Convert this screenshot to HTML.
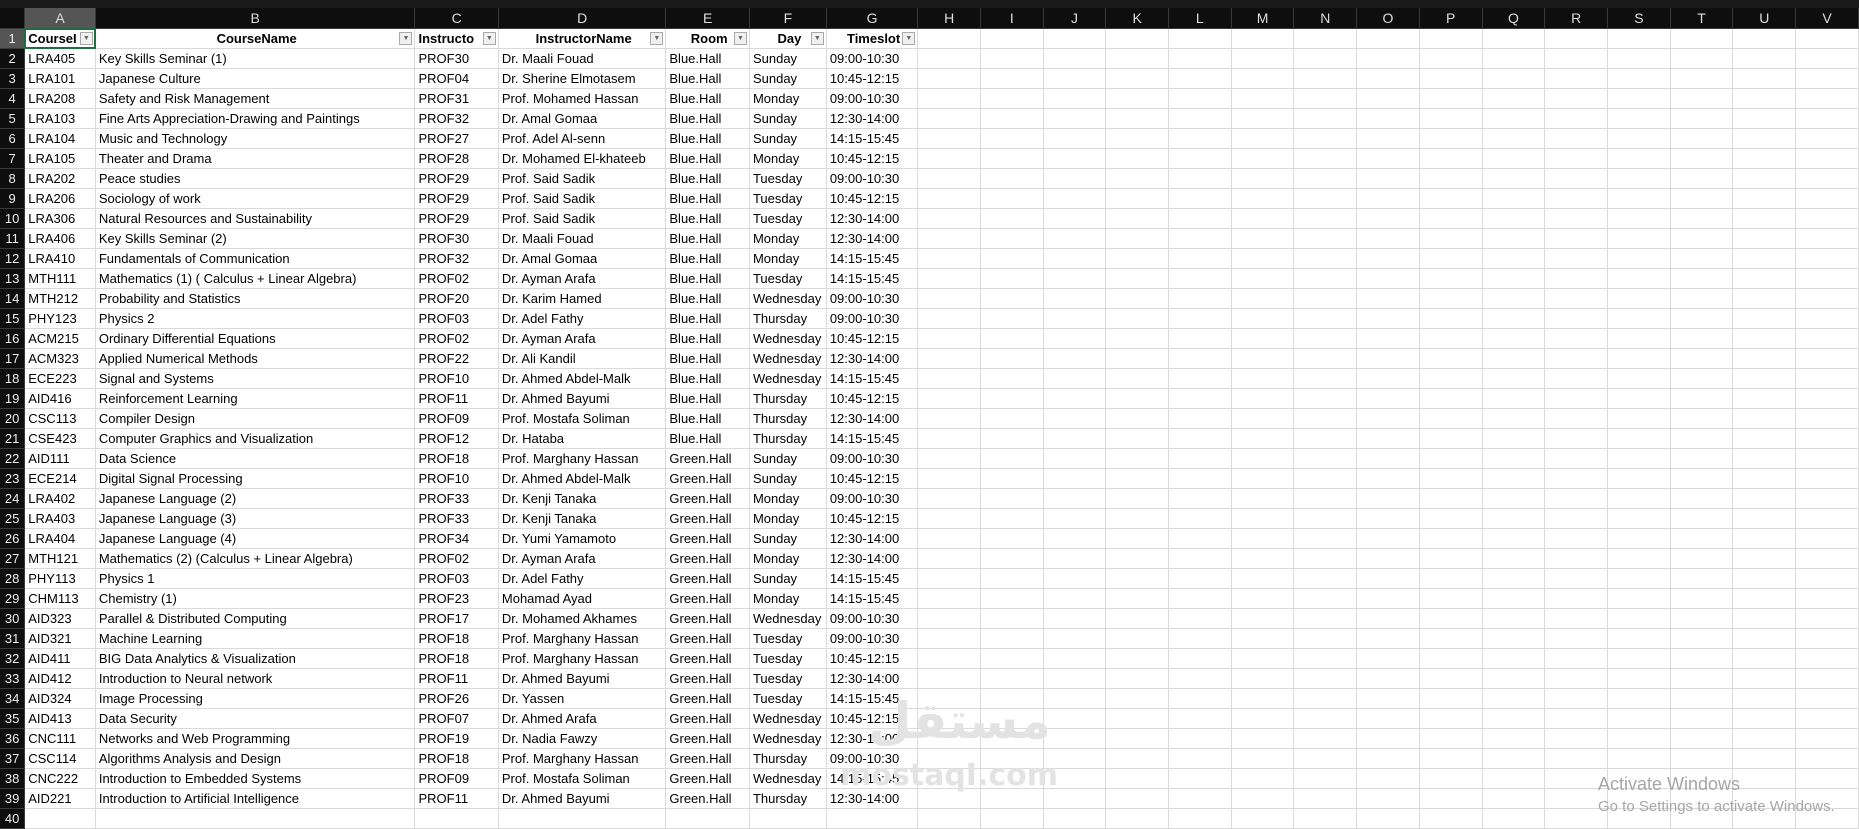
<!DOCTYPE html>
<html><head><meta charset="utf-8"><style>
*{margin:0;padding:0;box-sizing:border-box}
body{width:1859px;height:814px;overflow:hidden;background:#fff;font-family:"Liberation Sans",sans-serif;position:relative}
#top{position:absolute;left:0;top:0;width:1859px;height:9px;background:#1a1a1a}
table{position:absolute;left:0;top:8px;border-collapse:collapse;table-layout:fixed}
td{height:20px;border-right:1px solid #dadada;border-bottom:1px solid #dadada;font-size:13px;white-space:nowrap;overflow:hidden;padding-left:3px;color:#000}
tr.ch td{height:20px;background:#0e0e0e;color:#ddd;text-align:center;border-color:#3a3a3a;padding:0;font-size:14px}
td.rh{background:#0e0e0e;color:#eee;text-align:center;padding:0;border-color:#3a3a3a;font-size:13px}
tr.h td{font-weight:bold;text-align:center;position:relative}
tr.h td.rh{font-weight:normal;background:#555}
.f{position:absolute;right:2px;top:3px;width:13px;height:13px;border:1px solid #aaa;background:#f0f0f0;font-size:7px;line-height:12px;color:#666;text-align:center;font-weight:normal}
.sel{background:#555!important}
#wm1{position:absolute;left:868px;top:692px;font-size:50px;color:#e3e3e3;font-family:"DejaVu Sans",sans-serif;font-weight:bold}
#wm2{position:absolute;left:840px;top:758px;font-size:30px;color:#e3e3e3;font-family:"DejaVu Sans",sans-serif;font-weight:bold}
#aw{position:absolute;left:1598px;top:774px;color:#a6a6a6;font-size:18px}
#aw2{position:absolute;left:1598px;top:798px;color:#a6a6a6;font-size:15px}
#selbox{position:absolute;left:24px;top:28px;width:72px;height:21px;border:2px solid #1e6e42}
</style></head><body>
<div id="top"></div>
<table id="t">
<colgroup><col style="width:25px"><col style="width:71px"><col style="width:321px"><col style="width:84px"><col style="width:168px"><col style="width:84px"><col style="width:77px"><col style="width:92px">
<col style="width:64px"><col style="width:64px"><col style="width:64px"><col style="width:64px"><col style="width:64px"><col style="width:64px"><col style="width:64px"><col style="width:64px"><col style="width:64px"><col style="width:64px"><col style="width:64px"><col style="width:64px"><col style="width:64px"><col style="width:64px"><col style="width:64px"></colgroup>
<tr class="ch"><td></td><td class="sel">A</td><td>B</td><td>C</td><td>D</td><td>E</td><td>F</td><td>G</td><td>H</td><td>I</td><td>J</td><td>K</td><td>L</td><td>M</td><td>N</td><td>O</td><td>P</td><td>Q</td><td>R</td><td>S</td><td>T</td><td>U</td><td>V</td></tr>
<tr class="h"><td class="rh">1</td><td style="text-align:left">CourseI<span class="f">▼</span></td><td>CourseName<span class="f">▼</span></td><td style="text-align:left">Instructo<span class="f">▼</span></td><td>InstructorName<span class="f">▼</span></td><td>Room<span class="f">▼</span></td><td>Day<span class="f">▼</span></td><td>Timeslot<span class="f">▼</span></td><td></td><td></td><td></td><td></td><td></td><td></td><td></td><td></td><td></td><td></td><td></td><td></td><td></td><td></td><td></td></tr>
</table>
<div id="selbox"></div>
<div id="wm1">مستقل</div>
<div id="wm2">mostaqI.com</div>
<div id="aw">Activate Windows</div>
<div id="aw2">Go to Settings to activate Windows.</div>
<script>
var d=`LRA405|Key Skills Seminar (1)|PROF30|Dr. Maali Fouad|Blue.Hall|Sunday|09:00-10:30
LRA101|Japanese Culture|PROF04|Dr. Sherine Elmotasem|Blue.Hall|Sunday|10:45-12:15
LRA208|Safety and Risk Management|PROF31|Prof. Mohamed Hassan|Blue.Hall|Monday|09:00-10:30
LRA103|Fine Arts Appreciation-Drawing and Paintings|PROF32|Dr. Amal Gomaa|Blue.Hall|Sunday|12:30-14:00
LRA104|Music and Technology|PROF27|Prof. Adel Al-senn|Blue.Hall|Sunday|14:15-15:45
LRA105|Theater and Drama|PROF28|Dr. Mohamed El-khateeb|Blue.Hall|Monday|10:45-12:15
LRA202|Peace studies|PROF29|Prof. Said Sadik|Blue.Hall|Tuesday|09:00-10:30
LRA206|Sociology of work|PROF29|Prof. Said Sadik|Blue.Hall|Tuesday|10:45-12:15
LRA306|Natural Resources and Sustainability|PROF29|Prof. Said Sadik|Blue.Hall|Tuesday|12:30-14:00
LRA406|Key Skills Seminar (2)|PROF30|Dr. Maali Fouad|Blue.Hall|Monday|12:30-14:00
LRA410|Fundamentals of Communication|PROF32|Dr. Amal Gomaa|Blue.Hall|Monday|14:15-15:45
MTH111|Mathematics (1) ( Calculus + Linear Algebra)|PROF02|Dr. Ayman Arafa|Blue.Hall|Tuesday|14:15-15:45
MTH212|Probability and Statistics|PROF20|Dr. Karim Hamed|Blue.Hall|Wednesday|09:00-10:30
PHY123|Physics 2|PROF03|Dr. Adel Fathy|Blue.Hall|Thursday|09:00-10:30
ACM215|Ordinary Differential Equations|PROF02|Dr. Ayman Arafa|Blue.Hall|Wednesday|10:45-12:15
ACM323|Applied Numerical Methods|PROF22|Dr. Ali Kandil|Blue.Hall|Wednesday|12:30-14:00
ECE223|Signal and Systems|PROF10|Dr. Ahmed Abdel-Malk|Blue.Hall|Wednesday|14:15-15:45
AID416|Reinforcement Learning|PROF11|Dr. Ahmed Bayumi|Blue.Hall|Thursday|10:45-12:15
CSC113|Compiler Design|PROF09|Prof. Mostafa Soliman|Blue.Hall|Thursday|12:30-14:00
CSE423|Computer Graphics and Visualization|PROF12|Dr. Hataba|Blue.Hall|Thursday|14:15-15:45
AID111|Data Science|PROF18|Prof. Marghany Hassan|Green.Hall|Sunday|09:00-10:30
ECE214|Digital Signal Processing|PROF10|Dr. Ahmed Abdel-Malk|Green.Hall|Sunday|10:45-12:15
LRA402|Japanese Language (2)|PROF33|Dr. Kenji Tanaka|Green.Hall|Monday|09:00-10:30
LRA403|Japanese Language (3)|PROF33|Dr. Kenji Tanaka|Green.Hall|Monday|10:45-12:15
LRA404|Japanese Language (4)|PROF34|Dr. Yumi Yamamoto|Green.Hall|Sunday|12:30-14:00
MTH121|Mathematics (2) (Calculus + Linear Algebra)|PROF02|Dr. Ayman Arafa|Green.Hall|Monday|12:30-14:00
PHY113|Physics 1|PROF03|Dr. Adel Fathy|Green.Hall|Sunday|14:15-15:45
CHM113|Chemistry (1)|PROF23|Mohamad Ayad|Green.Hall|Monday|14:15-15:45
AID323|Parallel &amp; Distributed Computing|PROF17|Dr. Mohamed Akhames|Green.Hall|Wednesday|09:00-10:30
AID321|Machine Learning|PROF18|Prof. Marghany Hassan|Green.Hall|Tuesday|09:00-10:30
AID411|BIG Data Analytics &amp; Visualization|PROF18|Prof. Marghany Hassan|Green.Hall|Tuesday|10:45-12:15
AID412|Introduction to Neural network|PROF11|Dr. Ahmed Bayumi|Green.Hall|Tuesday|12:30-14:00
AID324|Image Processing|PROF26|Dr. Yassen|Green.Hall|Tuesday|14:15-15:45
AID413|Data Security|PROF07|Dr. Ahmed Arafa|Green.Hall|Wednesday|10:45-12:15
CNC111|Networks and Web Programming|PROF19|Dr. Nadia Fawzy|Green.Hall|Wednesday|12:30-14:00
CSC114|Algorithms Analysis and Design|PROF18|Prof. Marghany Hassan|Green.Hall|Thursday|09:00-10:30
CNC222|Introduction to Embedded Systems|PROF09|Prof. Mostafa Soliman|Green.Hall|Wednesday|14:15-15:45
AID221|Introduction to Artificial Intelligence|PROF11|Dr. Ahmed Bayumi|Green.Hall|Thursday|12:30-14:00`.split("\n");
var h="";d.forEach(function(l,i){var c=l.split("|");h+='<tr><td class="rh">'+(i+2)+'</td>';c.forEach(function(x){h+='<td>'+x+'</td>'});for(var k=0;k<15;k++)h+='<td></td>';h+='</tr>';});
h+='<tr><td class="rh">40</td>'+'<td></td>'.repeat(22)+'</tr>';
document.getElementById("t").insertAdjacentHTML("beforeend",h);
</script>
</body></html>
